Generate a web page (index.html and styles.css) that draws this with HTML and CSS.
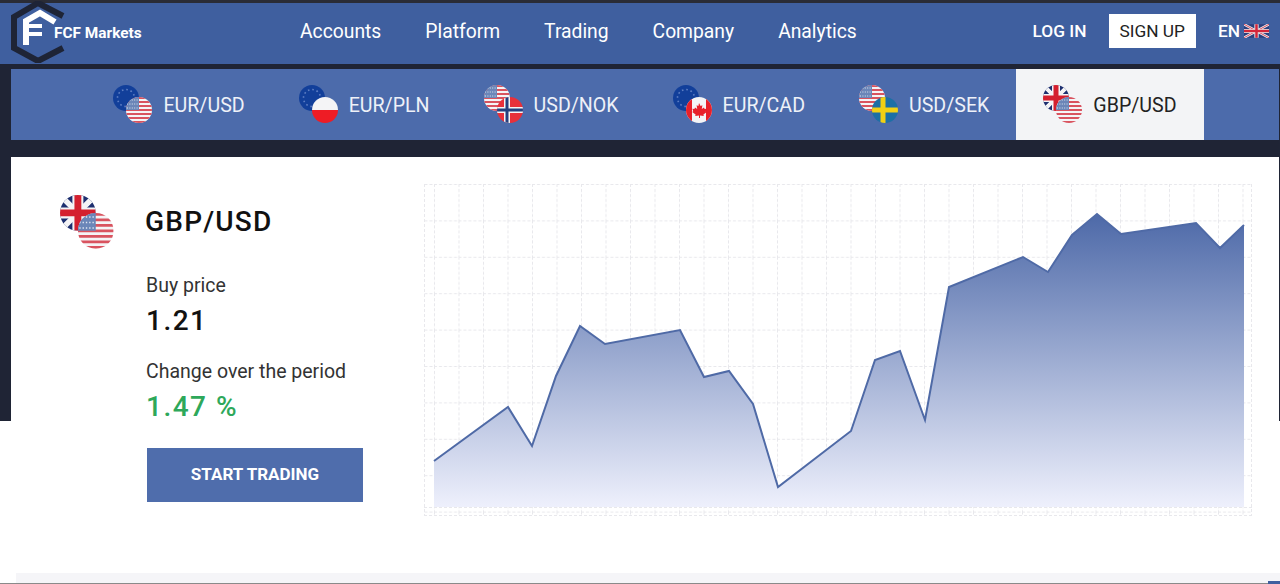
FILE: index.html
```html
<!DOCTYPE html>
<html>
<head lang="en">
    <meta charset="utf-8">
    <title>FCF Markets</title>
    <link rel="stylesheet" href="styles.css">
</head>
<body>
<svg class="defs" width="0" height="0">
    <defs>
        <clipPath id="disc"><circle cx="13" cy="13" r="13"/></clipPath>
        <symbol id="f-eu" viewBox="0 0 26 26">
            <circle cx="13" cy="13" r="13" fill="#123f9a"/>
            <circle cx="13" cy="13" r="8.5" fill="none" stroke="#5f7fc4" stroke-width="1.6" stroke-dasharray="1.6 2.85"/>
        </symbol>
        <symbol id="f-us" viewBox="0 0 26 26">
            <g clip-path="url(#disc)">
                <rect width="26" height="26" fill="#f4f4f6"/>
                <path d="M0 1h26M0 5h26M0 9h26M0 13h26M0 17h26M0 21h26M0 25h26" stroke="#d9535f" stroke-width="2"/>
                <rect width="13" height="13" fill="#6b86b8"/>
                <path d="M1 3h12M1 7h12M1 11h12" stroke="#dfe5f1" stroke-width="1" stroke-dasharray="1 1.4"/>
            </g>
        </symbol>
        <symbol id="f-pl" viewBox="0 0 26 26">
            <g clip-path="url(#disc)">
                <rect width="26" height="13" fill="#f4f4f6"/>
                <rect y="13" width="26" height="13" fill="#ee1c25"/>
            </g>
        </symbol>
        <symbol id="f-no" viewBox="0 0 26 26">
            <g clip-path="url(#disc)">
                <rect width="26" height="26" fill="#e8303a"/>
                <path d="M0 13h26M10 0v26" stroke="#f4f4f6" stroke-width="6"/>
                <path d="M0 13h26M10 0v26" stroke="#24407f" stroke-width="3"/>
            </g>
        </symbol>
        <symbol id="f-ca" viewBox="0 0 26 26">
            <g clip-path="url(#disc)">
                <rect width="26" height="26" fill="#f4f4f6"/>
                <rect width="6" height="26" fill="#e8202a"/>
                <rect x="20" width="6" height="26" fill="#e8202a"/>
                <path d="M13 6l1.6 3 1.8-.8-.6 3.8 2.2-1.6.6 1.6 2-.3-.8 2.6 1 .6-3.4 2.6.4 1.4-3.8-.5V21h-1v-2.6l-3.8.5.4-1.4-3.4-2.6 1-.6-.8-2.6 2 .3.6-1.6 2.2 1.6-.6-3.8 1.8.8z" fill="#e8202a"/>
            </g>
        </symbol>
        <symbol id="f-se" viewBox="0 0 26 26">
            <g clip-path="url(#disc)">
                <rect width="26" height="26" fill="#1d6fa5"/>
                <path d="M0 13h26M11 0v26" stroke="#f3d014" stroke-width="5"/>
            </g>
        </symbol>
        <symbol id="f-gb" viewBox="0 0 26 26">
            <g clip-path="url(#disc)">
                <rect width="26" height="26" fill="#1d2f6f"/>
                <path d="M0 0l26 26M26 0L0 26" stroke="#f4f4f6" stroke-width="4"/>
                <path d="M13 0v26M0 13h26" stroke="#f4f4f6" stroke-width="8"/>
                <path d="M13 0v26M0 13h26" stroke="#d4202f" stroke-width="5"/>
            </g>
        </symbol>
    </defs>
</svg>

<div class="wrap">
    <div class="header">
        <a class="logo">
            <svg class="logo-mark" viewBox="0 0 56 62" width="56" height="62">
                <polyline points="53,15 28,2 4,16 4,47 28,60 53,47" fill="none" stroke="#1e2436" stroke-width="6"/>
                <polyline points="45,21 30,12 16,20 16,44" fill="none" stroke="#fff" stroke-width="6"/>
                <path d="M18 23h14v4H18zM18 31h14v4H18z" fill="#fff"/>
            </svg>
            <span class="logo-text">FCF Markets</span>
        </a>
        <div class="nav">
            <a>Accounts</a>
            <a>Platform</a>
            <a>Trading</a>
            <a>Company</a>
            <a>Analytics</a>
        </div>
        <div class="user">
            <a class="login">LOG IN</a>
            <a class="signup">SIGN UP</a>
            <a class="lang">EN
                <svg viewBox="0 0 26 14" width="25" height="14">
                    <rect width="26" height="14" fill="#2c3f7d"/>
                    <path d="M0 0l26 14M26 0L0 14" stroke="#eee" stroke-width="2.6"/>
                    <path d="M0 0l26 14M26 0L0 14" stroke="#d8455a" stroke-width="1"/>
                    <path d="M13 0v14M0 7h26" stroke="#eee" stroke-width="4.4"/>
                    <path d="M13 0v14M0 7h26" stroke="#d4253a" stroke-width="2.6"/>
                </svg>
            </a>
        </div>
    </div>

    <div class="tabs">
        <a class="tab">
            <svg class="pair" viewBox="0 0 40 40"><use href="#f-eu" width="26" height="26"/><use href="#f-us" x="13" y="12" width="26" height="26"/></svg>
            EUR/USD
        </a>
        <a class="tab">
            <svg class="pair" viewBox="0 0 40 40"><use href="#f-eu" width="26" height="26"/><use href="#f-pl" x="13" y="12" width="26" height="26"/></svg>
            EUR/PLN
        </a>
        <a class="tab">
            <svg class="pair" viewBox="0 0 40 40"><use href="#f-us" width="26" height="26"/><use href="#f-no" x="13" y="12" width="26" height="26"/></svg>
            USD/NOK
        </a>
        <a class="tab">
            <svg class="pair" viewBox="0 0 40 40"><use href="#f-eu" width="26" height="26"/><use href="#f-ca" x="13" y="12" width="26" height="26"/></svg>
            EUR/CAD
        </a>
        <a class="tab">
            <svg class="pair" viewBox="0 0 40 40"><use href="#f-us" width="26" height="26"/><use href="#f-se" x="13" y="12" width="26" height="26"/></svg>
            USD/SEK
        </a>
        <a class="tab active">
            <svg class="pair" viewBox="0 0 40 40"><use href="#f-gb" width="26" height="26"/><use href="#f-us" x="13" y="12" width="26" height="26"/></svg>
            GBP/USD
        </a>
    </div>

    <div class="card">
        <div class="info">
            <div class="info-head">
                <svg class="pair-big" viewBox="0 0 40 40"><use href="#f-gb" width="26" height="26"/><use href="#f-us" x="13" y="13" width="26" height="26"/></svg>
                <div class="title">GBP/USD</div>
            </div>
            <div class="info-body">
                <div class="label first">Buy price</div>
                <div class="value">1.21</div>
                <div class="label">Change over the period</div>
                <div class="value up">1.47 %</div>
                <a class="button">START TRADING</a>
            </div>
        </div>
        <svg class="chart" viewBox="0 0 828 332" width="828" height="332">
            <defs>
                <linearGradient id="area" gradientUnits="userSpaceOnUse" x1="0" y1="30" x2="0" y2="323">
                    <stop offset="0" stop-color="#4d69a8"/>
                    <stop offset="1" stop-color="#eef0fc"/>
                </linearGradient>
                <pattern id="grid" patternUnits="userSpaceOnUse" x="10" y="0" width="24.5" height="36.4">
                    <path d="M0.5 0V36.4M0 0.5H24.5" fill="none" stroke="#e8e8ec" stroke-width="1" stroke-dasharray="3 2"/>
                </pattern>
            </defs>
            <rect width="828" height="332" fill="url(#grid)"/>
            <path d="M0.5 0V332M0 323.5H828M0 331.5H828M827.5 0V332" fill="none" stroke="#e8e8ec" stroke-dasharray="3 2"/>
            <polygon fill="url(#area)" points="10,323 10,277 84,223 108,262 132,192 156,142 181,160 256,146 280,193 305,187 329,220 354,303 427,247 451,176 476,167 501,236 525,103 599,73 624,88 648,51 673,30 697,50 772,39 796,64 820,41 820,323"/>
            <polyline fill="none" stroke="#4f6aa6" stroke-width="2" points="10,277 84,223 108,262 132,192 156,142 181,160 256,146 280,193 305,187 329,220 354,303 427,247 451,176 476,167 501,236 525,103 599,73 624,88 648,51 673,30 697,50 772,39 796,64 820,41"/>
        </svg>
    </div>

    <div class="strip"></div>
    <div class="rule"></div>
</div>
</body>
</html>
```

FILE: styles.css
```css
* {
    box-sizing: border-box;
}

html, body {
    margin: 0;
    overflow: hidden;
}

body {
    background: #fff;
    font-family: Roboto, "Liberation Sans", sans-serif;
}

.defs {
    position: absolute;
}

.wrap {
    height: 584px;
    background: linear-gradient(#1f2435 421px, #fff 421px);
}

/* header */
.header {
    display: flex;
    align-items: center;
    height: 64px;
    padding-bottom: 4px;
    border-top: 3px solid #2a2c36;
    background: #3f5f9f;
    color: #fff;
}

.logo {
    display: flex;
    align-items: center;
    width: 300px;
    margin-top: 4px;
    padding-left: 10px;
}

.logo-mark {
    flex: none;
    margin-top: -3px;
}

.logo-text {
    margin-top: -2px;
    margin-left: -12px;
    font-size: 15.4px;
    font-weight: 700;
}

.nav {
    display: flex;
    gap: 44px;
    font-size: 19.3px;
}

.user {
    display: flex;
    align-items: center;
    margin-top: -2px;
    margin-left: auto;
    padding-right: 11px;
    font-size: 17.3px;
    font-weight: 500;
}

.signup {
    margin-left: 22px;
    padding: 0 11px;
    height: 34px;
    line-height: 34px;
    background: #fff;
    color: #222;
    font-weight: 400;
}

.lang {
    display: flex;
    align-items: center;
    gap: 4px;
    margin-left: 22px;
}

/* tabs */
.tabs {
    display: flex;
    justify-content: center;
    height: 71px;
    margin: 5px 1px 0 11px;
    background: #4c6bab;
}

.tab {
    display: flex;
    align-items: center;
    gap: 10px;
    padding: 2px 27px 0;
    color: #eef1f8;
    font-size: 19.6px;
}

.tab.active {
    background: #f3f4f6;
    color: #222;
}

.pair {
    width: 40px;
    height: 40px;
    margin-top: -2px;
}

/* card */
.card {
    display: flex;
    align-items: flex-start;
    margin: 17px 1px 0 11px;
    padding: 27px 0 57px 49px;
    background: #fff;
}

.info {
    width: 364px;
    padding-top: 11px;
}

.info-head {
    display: flex;
    align-items: center;
    gap: 30px;
}

.pair-big {
    width: 55px;
    height: 55px;
}

.title {
    margin-top: -2px;
    font-size: 28px;
    font-weight: 500;
    letter-spacing: 1.2px;
    color: #111;
}

.info-body {
    margin-left: 86px;
}

.label {
    margin-top: 21px;
    font-size: 19.5px;
    line-height: 24px;
    color: #333;
}

.label.first {
    margin-top: 24px;
}

.value {
    margin-top: 5px;
    font-size: 28px;
    font-weight: 500;
    line-height: 36px;
    letter-spacing: 1.5px;
    color: #111;
}

.value.up {
    color: #2ea85a;
}

.button {
    display: block;
    width: 216px;
    height: 54px;
    margin-top: 23px;
    margin-left: 1px;
    background: #4f6dac;
    color: #fff;
    font-size: 17px;
    font-weight: 700;
    line-height: 52px;
    text-align: center;
}

.chart {
    flex: none;
}

/* bottom edge */
.strip {
    height: 10px;
    margin-left: 16px;
    background: #f5f5f8;
}

.rule {
    position: relative;
    height: 1px;
    background: #8a8a8a;
}

.rule::after {
    content: "";
    position: absolute;
    right: 0;
    bottom: 0;
    width: 12px;
    height: 3px;
    background: #3f5f9f;
}
```
